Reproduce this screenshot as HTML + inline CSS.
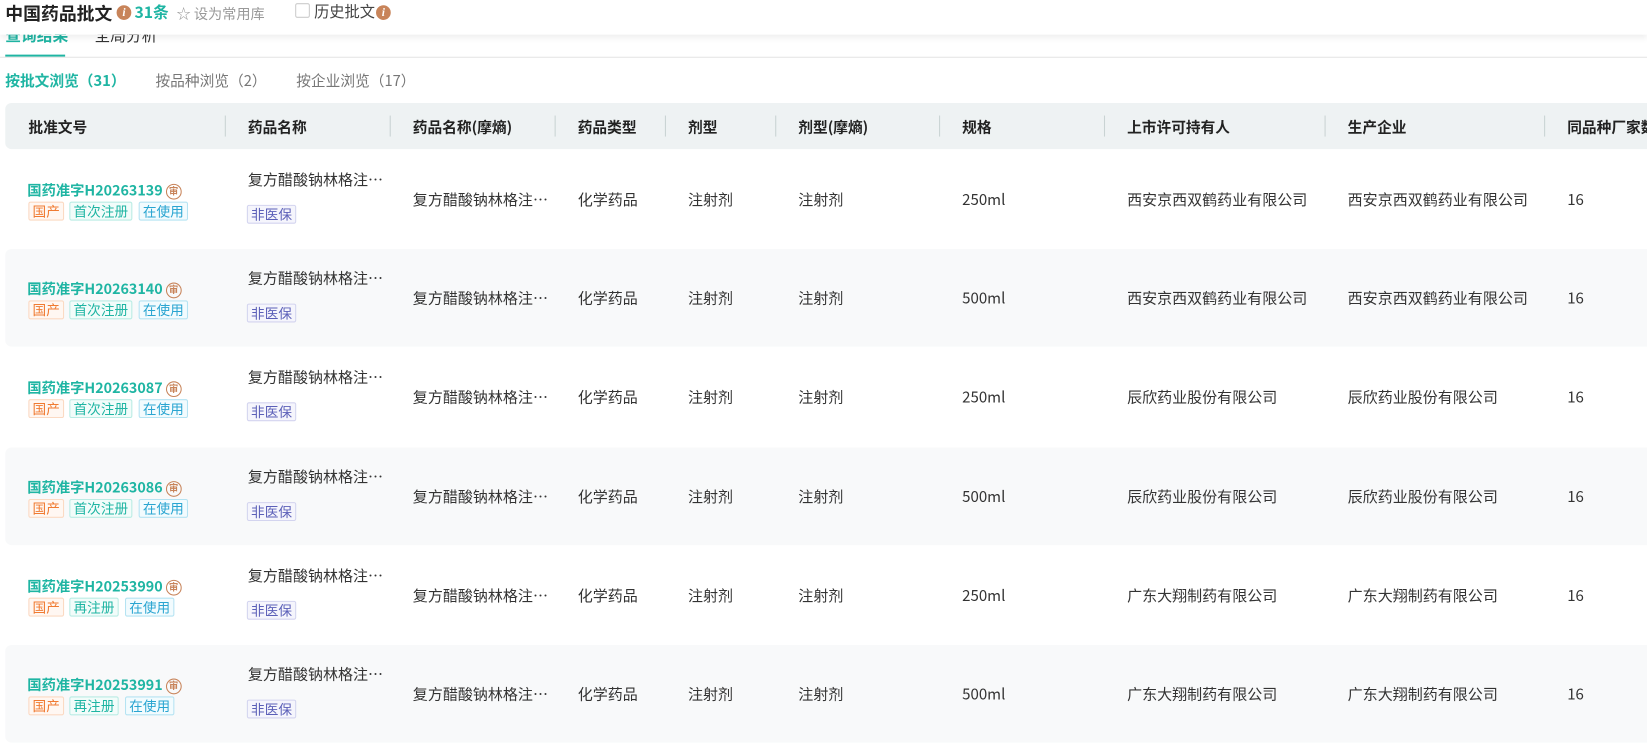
<!DOCTYPE html>
<html><head><meta charset="utf-8"><style>
*{margin:0;padding:0;box-sizing:border-box}
html,body{width:1647px;height:746px;overflow:hidden;background:#fff}
body{font-family:"Noto Sans CJK SC","Liberation Sans",sans-serif;color:#333;font-size:14px;position:relative}
#w{position:absolute;left:0;top:0;width:1568px;height:711px;transform:scale(1.0504);transform-origin:0 0}
.hdr{position:absolute;left:0;top:0;width:1568px;height:33px;background:#fff;box-shadow:0 3px 6px rgba(0,0,0,.07);z-index:5}
.abs{position:absolute;white-space:nowrap;line-height:1.2}
.ic{display:inline-block;width:14px;height:14px;border-radius:50%;background:#c8845a;color:#fff;font-size:11px;font-weight:bold;font-style:italic;text-align:center;line-height:14px;font-family:"Liberation Serif",serif}
.tab{position:absolute;top:25px;font-size:15px;line-height:1.2}
.thead{position:absolute;left:5px;top:98px;width:1580px;height:44px;background:#eef2f3;border-radius:6px}
.th{position:absolute;top:111px;font-weight:bold;font-size:14px;color:#222;white-space:nowrap;line-height:20px}
.dv{position:absolute;top:110px;width:1px;height:20px;background:#c9d3d3}
.row{position:absolute;left:5px;width:1580px;height:93px;border-radius:6px}
.c{position:absolute;font-size:14.3px;color:#333;white-space:nowrap;line-height:20px}
.no{position:absolute;font-weight:bold;color:#1fb5a3;font-size:13.6px;white-space:nowrap;line-height:20px}
.seal{display:inline-block;width:15px;height:15px;border:1.3px solid #c8845a;border-radius:50%;color:#c8845a;font-size:9px;text-align:center;line-height:12px;vertical-align:1px;margin-left:3px}
.tg{position:absolute;height:18px;font-size:13px;line-height:16px;padding:0 3px;border:1px solid;border-radius:2px;white-space:nowrap}
.t1{color:#f07b32;border-color:#fbd9c2;background:#fff7f2}
.t2{color:#1fb5a3;border-color:#b9ece4;background:#f2fcfa}
.t3{color:#2aa5d1;border-color:#b5e3f2;background:#f2fbfe}
.t4{color:#5b5fb8;border-color:#d3d4ef;background:#f5f5fc}
</style></head><body><div id="w">
<div class="hdr">
<div class="abs" style="left:5px;top:2px;font-size:17px;font-weight:bold;color:#222">中国药品批文</div>
<span class="abs ic" style="left:111px;top:5px">i</span>
<div class="abs" style="left:128px;top:3px;font-size:15px;font-weight:bold;color:#1fb5a3">31条</div>
<div class="abs" style="left:168px;top:4px;font-size:13.5px;color:#999">☆ 设为常用库</div>
<div class="abs" style="left:281px;top:3px;width:14px;height:14px;border:1px solid #ccc;border-radius:2px"></div>
<div class="abs" style="left:299px;top:2px;font-size:14.5px;color:#444">历史批文</div>
<span class="abs ic" style="left:358px;top:5px">i</span>
</div>
<div class="tab" style="left:5px;color:#1fb5a3;font-weight:bold">查询结果</div>
<div class="tab" style="left:90px;color:#333">全局分析</div>
<div class="abs" style="left:5px;top:52px;width:57px;height:2px;background:#1fb5a3"></div>
<div class="abs" style="left:0;top:54px;width:1568px;height:1px;background:#e4e4e4"></div>
<div class="abs" style="left:5px;top:69px;font-size:14px;font-weight:bold;color:#1fb5a3">按批文浏览（31）</div>
<div class="abs" style="left:148px;top:69px;font-size:14px;color:#777">按品种浏览（2）</div>
<div class="abs" style="left:282px;top:69px;font-size:14px;color:#777">按企业浏览（17）</div>
<div class="thead"></div>
<div class="th" style="left:27px">批准文号</div><div class="th" style="left:236px">药品名称</div><div class="th" style="left:393px">药品名称(摩熵)</div><div class="th" style="left:550px">药品类型</div><div class="th" style="left:655px">剂型</div><div class="th" style="left:760px">剂型(摩熵)</div><div class="th" style="left:916px">规格</div><div class="th" style="left:1073px">上市许可持有人</div><div class="th" style="left:1283px">生产企业</div><div class="th" style="left:1492px">同品种厂家数</div>
<div class="dv" style="left:214px"></div><div class="dv" style="left:371px"></div><div class="dv" style="left:528px"></div><div class="dv" style="left:633px"></div><div class="dv" style="left:738px"></div><div class="dv" style="left:894px"></div><div class="dv" style="left:1051px"></div><div class="dv" style="left:1261px"></div><div class="dv" style="left:1470px"></div>
<div id="rows"></div>
</div>
<script>
var d=[["H20263139","首次注册","250ml","西安京西双鹤药业有限公司"],["H20263140","首次注册","500ml","西安京西双鹤药业有限公司"],["H20263087","首次注册","250ml","辰欣药业股份有限公司"],["H20263086","首次注册","500ml","辰欣药业股份有限公司"],["H20253990","再注册","250ml","广东大翔制药有限公司"],["H20253991","再注册","500ml","广东大翔制药有限公司"]];
var h="";d.forEach(function(r,i){var y=143+i*94.2,m=y+47;
h+='<div class="row" style="top:'+y+'px;background:'+(i%2?'#f8f9fa':'#fff')+'"></div>';
h+='<div class="no" style="left:26px;top:'+(m-20)+'px">国药准字'+r[0]+'<span class="seal">审</span></div>';
var w=r[1]=="首次注册"?60:47;
h+='<div class="tg t1" style="left:27px;top:'+(m+2)+'px">国产</div><div class="tg t2" style="left:66px;top:'+(m+2)+'px;width:'+w+'px">'+r[1]+'</div><div class="tg t3" style="left:'+(72+w)+'px;top:'+(m+2)+'px">在使用</div>';
h+='<div class="c" style="left:236px;top:'+(m-29)+'px">复方醋酸钠林格注…</div><div class="tg t4" style="left:235px;top:'+(m+5)+'px">非医保</div>';
var t=m-10;
h+='<div class="c" style="left:393px;top:'+t+'px">复方醋酸钠林格注…</div><div class="c" style="left:550px;top:'+t+'px">化学药品</div><div class="c" style="left:655px;top:'+t+'px">注射剂</div><div class="c" style="left:760px;top:'+t+'px">注射剂</div><div class="c" style="left:916px;top:'+t+'px">'+r[2]+'</div><div class="c" style="left:1073px;top:'+t+'px">'+r[3]+'</div><div class="c" style="left:1283px;top:'+t+'px">'+r[3]+'</div><div class="c" style="left:1492px;top:'+t+'px">16</div>';});
document.getElementById('rows').innerHTML=h;
</script>
</body></html>
